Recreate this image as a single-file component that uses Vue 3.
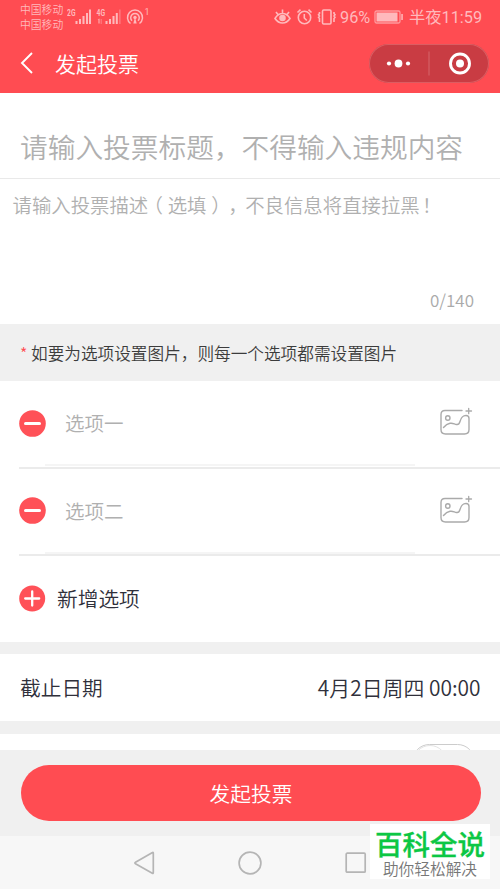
<script setup>
const options = ['选项一', '选项二']
</script>

<template>
  <main class="phone">
    <header class="header">
      <div class="status">
        <div class="carriers"><span>中国移动</span><span>中国移动</span></div>
        <svg class="signals" width="84" height="24" viewBox="0 0 84 24" fill="none">
          <g fill="#ffb9bc">
            <text x="0" y="10.500" class="net" textLength="8.500" lengthAdjust="spacingAndGlyphs">2G</text>
            <path d="M8.500 16h2v3h-2zM12 14h2v5h-2zM15.500 11h2v8h-2zM19 8h2v11h-2zM22 4.500h2V19h-2z" />
            <text x="29.500" y="10.500" class="net" textLength="8.500" lengthAdjust="spacingAndGlyphs">4G</text>
            <path d="M30.500 14.500l2-1v5h-1v-4zM38.500 16h2v3h-2zM42 14h2v5h-2zM45.500 11h2v8h-2zM48.800 8h2v11h-2z" />
            <path opacity=".35" d="M33.500 14H35v5h-1.500zM52 4.500h1.700V19H52z" />
            <circle cx="68" cy="12.500" r="1.700" />
            <path d="M67.500 14h1l1.200 4.500h-3.400z" />
            <text x="77.500" y="10" class="net one">1</text>
          </g>
          <path d="M63.500 18.500a7.500 7.500 0 1 1 9 0M65 15.800a4.300 4.300 0 1 1 6 0" stroke="#ffb9bc" stroke-width="1.500" />
        </svg>
        <svg class="indicators" width="64" height="18" viewBox="0 0 64 18" fill="none" stroke="#ffb9bc" stroke-width="1.600">
          <path d="M1 10.500Q4 5.500 8.500 5.500T16 10.500Q13 15 8.500 15T1 10.500ZM2 4l2.300 3M8.500 1.500v4M15 4l-2.300 3" />
          <circle cx="8.500" cy="10" r="2.500" fill="#ffb9bc" />
          <circle cx="30.500" cy="9.500" r="6.200" />
          <path d="M30.300 6v4l2.500 2.500M23.500 4.500l3-2.800M37.500 4.500l-3-2.800" />
          <rect x="48.500" y="2" width="8.500" height="14" rx="1.200" />
          <path d="M45.500 4v1.500l-1 1.200 1 1.300-1 1.300 1 1.300V14M60 4v1.500l1 1.200-1 1.300 1 1.300-1 1.300V14" />
        </svg>
        <span class="percent">96%</span>
        <svg class="battery" width="30" height="14" viewBox="0 0 30 14" fill="none">
          <rect x="1" y="1" width="25" height="12" rx="1.500" stroke="#ff999d" stroke-width="1.300" />
          <path d="M2.500 2.500h21v9h-21zM27.300 4h1.500v6h-1.500z" fill="#ffb9bc" />
        </svg>
        <span class="time">半夜11:59</span>
      </div>
      <div class="nav">
        <svg class="back" width="14" height="22" viewBox="0 0 14 22" fill="none" stroke="#fff" stroke-width="1.900"><path d="M12 1L2 11l10 10" /></svg>
        <h1>发起投票</h1>
        <div class="capsule">
          <svg width="120" height="39" viewBox="0 0 120 39" fill="#fff">
            <circle cx="20" cy="19.500" r="2.100" /><circle cx="29.500" cy="19.500" r="3.900" /><circle cx="39" cy="19.500" r="2.100" />
            <path d="M59.500 7.500h1v24h-1z" opacity=".22" />
            <circle cx="91" cy="19.500" r="9.500" fill="none" stroke="#fff" stroke-width="2.900" /><circle cx="91" cy="19.500" r="4" />
          </svg>
        </div>
      </div>
    </header>

    <section class="title-field">请输入投票标题，不得输入违规内容</section>
    <section class="description">
      <p>请输入投票描述<span class="punct">（</span>选填<span class="punct">）</span><span class="punct mark">，</span>不良信息将直接拉黑<span class="punct mark">！</span></p>
      <span class="counter">0/140</span>
    </section>
    <div class="notice"><span class="star">*</span><span>如要为选项设置图片，则每一个选项都需设置图片</span></div>

    <section class="options">
      <div v-for="option in options" :key="option" class="option">
        <div class="option-main">
          <svg width="27" height="27" viewBox="0 0 27 27"><circle cx="13.500" cy="13.500" r="13.300" fill="#ff5158" /><path d="M6.500 13.500h14" stroke="#fff" stroke-width="3" stroke-linecap="round" /></svg>
          <span class="option-text">{{ option }}</span>
          <svg class="picture" width="33" height="28" viewBox="0 0 33 28" fill="none" stroke="#aaa" stroke-width="1.400" stroke-linecap="round">
            <path d="M22 3.500H5Q1 3.500 1 7.500V22.500Q1 27 5.500 27H24.500Q29 27 29 22.500V11.500Q29 8.500 26 8.500C22 8.500 21 11 20 14.500Q19 18 16.500 17.500C14 17 13 15.800 10 16.300Q6.500 17 3.500 20.500" />
            <circle cx="7.800" cy="11" r="2.200" />
            <path d="M26 4h5.500M28.700 1.300v5.400" stroke-width="1.300" />
          </svg>
        </div>
        <div class="input-line"></div>
      </div>
      <div class="add">
        <svg width="27" height="27" viewBox="0 0 27 27"><circle cx="13.200" cy="13.500" r="13" fill="#ff5158" /><path d="M6.200 13.500h14M13.200 6.500v14" stroke="#fff" stroke-width="2.300" stroke-linecap="round" /></svg>
        <span>新增选项</span>
      </div>
    </section>

    <section class="deadline"><span>截止日期</span><span class="date">4月2日周四 00:00</span></section>
    <section class="setting"><div class="switch"><i></i></div></section>
    <footer class="submit"><button>发起投票</button></footer>
    <nav class="system">
      <svg class="sys-back" width="22" height="26" viewBox="0 0 22 26"><path d="M19.500 2.500Q20.300 2 20.300 3V22.500Q20.300 23.800 19.300 23.200L2.500 13.700Q1.300 13 2.500 12.300Z" /></svg>
      <svg class="sys-home" width="26" height="26" viewBox="0 0 26 26"><circle cx="13" cy="13" r="10.900" /></svg>
      <svg class="sys-recent" width="22" height="22" viewBox="0 0 22 22"><rect x="1.200" y="1.200" width="19" height="19" rx="1" /></svg>
    </nav>
    <aside class="watermark"><strong>百科全说</strong><span>助你轻松解决</span></aside>
  </main>
</template>

<style>
body { margin: 0; overflow: hidden; }
</style>

<style scoped>
* { box-sizing: border-box; }
.phone { position: relative; width: 500px; height: 889px; overflow: hidden; display: flex; flex-direction: column; background: #fff; font-family: "Noto Sans CJK SC", sans-serif; font-weight: 350; color: #30303b; white-space: nowrap; }
svg { display: block; flex: none; }
.header { height: 93px; flex: none; background: #ff4c52; color: #fff; }
.status { height: 34px; display: flex; color: #ffb9bc; }
.carriers { width: 44px; margin-left: 20px; padding-top: 2px; display: flex; flex-direction: column; font-size: 10.800px; line-height: 15px; }
.signals { margin: 5px 0 0 3px; }
.net { font: 700 9px Roboto, sans-serif; }
.one { font-weight: 400; }
.indicators { margin: 8px 0 0 123px; }
.percent { width: 31px; margin-left: 2px; font: 400 16.300px/35px Roboto, sans-serif; }
.battery { margin: 10px 0 0 3px; }
.time { margin-left: 5px; font: 400 16.300px/35px Roboto, "Noto Sans CJK SC", sans-serif; }
.nav { height: 59px; display: flex; align-items: center; padding-left: 20px; }
.back { margin-top: -1px; }
h1 { margin: -2px 0 0 21px; font-size: 21px; line-height: 30px; font-weight: 350; }
.capsule { width: 120px; height: 39px; margin-left: auto; margin-right: 11.500px; border-radius: 20px; background: #c93c43; box-shadow: inset 0 0 0 1px #db5d62; }
.title-field { height: 86px; flex: none; padding: 32px 20px 0; border-bottom: 1px solid #e9e9e9; font-size: 27.700px; line-height: 42px; color: #b0b0b0; }
.description { height: 145px; flex: none; display: flex; flex-direction: column; padding: 11px 26px 0 12.500px; color: #b0b0b0; }
.description p { margin: 0; font-size: 19.400px; line-height: 29px; }
.punct { display: inline-block; width: 19.400px; text-align: center; font-feature-settings: "halt"; }
.mark { padding-right: 5px; }
.counter { align-self: flex-end; margin-top: 69px; font-size: 17px; line-height: 24px; color: #aaa; }
.notice { height: 57px; flex: none; display: flex; align-items: center; padding: 1px 0 0 20px; background: #f0f0f0; font-size: 16.650px; color: #3c3c3c; }
.star { width: 11px; color: #ff4c52; font-size: 16px; }
.options { height: 261px; flex: none; }
.option { height: 87.500px; margin-left: 19px; border-bottom: 2px solid #ebebeb; }
.option-main { height: 83px; padding-top: 1px; display: flex; align-items: center; }
.option-text { margin: -1px 0 0 19px; font-size: 19.500px; color: #b0b0b0; }
.picture { margin-left: auto; margin-right: 27px; margin-top: -4px; }
.input-line { width: 370px; height: 2px; margin-left: 26px; background: #f5f5f5; }
.add { height: 86px; padding-bottom: 2px; display: flex; align-items: center; gap: 11px; padding-left: 19px; font-size: 20.700px; }
.deadline { height: 92px; flex: none; display: flex; align-items: center; justify-content: space-between; padding: 0 19.500px 2px 20px; border: solid #f0f0f0; border-width: 12px 0 13px; font-size: 20.700px; }
.date { font-size: 20.900px; }
.setting { height: 16px; flex: none; overflow: hidden; display: flex; justify-content: flex-end; padding: 10px 25px 0 0; }
.switch { flex: none; width: 63px; height: 35px; border: 1px solid #ccc; border-radius: 18px; }
.switch i { display: block; width: 34px; height: 34px; border-radius: 50%; border: 1px solid #e4e4e4; }
.submit { height: 86px; flex: none; padding: 15px 19px 0 21px; background: #f0f0f0; }
button { display: block; width: 460px; height: 56px; padding: 0; border: 0; border-radius: 28px; background: #ff4c52; color: #fff; font: 350 20.700px/56px "Noto Sans CJK SC", sans-serif; }
.system { height: 53px; flex: none; display: flex; align-items: center; padding-left: 133px; background: #f7f7f7; fill: none; stroke: #b5b5b5; stroke-width: 1.700; }
.sys-home { margin-left: 82px; }
.sys-recent { margin-left: 82px; }
.watermark { position: absolute; left: 370px; top: 824px; width: 120px; height: 55px; background: #fff; display: flex; flex-direction: column; align-items: center; }
.watermark strong { margin-top: -1px; font-size: 27.500px; line-height: 40px; font-weight: 500; -webkit-text-stroke: .35px #0cc744; color: #0cc744; }
.watermark span { font-size: 15.700px; line-height: 16px; margin-top: -2px; color: #777; }
</style>
